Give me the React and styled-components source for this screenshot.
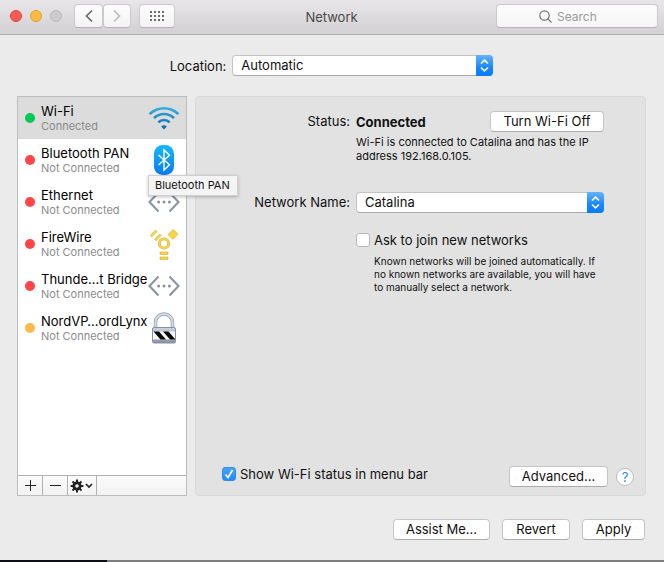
import React from "react";
import styled, { createGlobalStyle } from "styled-components";

const GlobalStyle = createGlobalStyle`
  *, *::before, *::after { box-sizing: border-box; }
  body {
    margin: 0;
    background: #ebebeb;
    color: #111;
    font: 13px/16px Inter, "Liberation Sans", sans-serif;
  }
  button, input, select { font: inherit; color: inherit; margin: 0; }
`;

const Window = styled.div`
  min-height: 100vh;
  display: flex;
  flex-direction: column;
`;

const TitleBar = styled.header`
  display: grid;
  grid-template-columns: 1fr auto 1fr;
  align-items: center;
  height: 35px;
  padding: 0 6px 2px 10px;
  background: linear-gradient(#e8e6e8, #d2d0d2);
  border-bottom: 1px solid #b1afb1;
`;

const Title = styled.h1`
  margin: 0 5px 0 0;
  padding-top: 2px;
  font-size: 13px;
  font-weight: 400;
  color: #484848;
`;

const TitleControls = styled.div`
  display: flex;
  align-items: center;
`;

const Lights = styled.div`
  display: flex;
  gap: 8px;
  margin-right: 12px;
`;

const Light = styled.button`
  width: 12px;
  height: 12px;
  padding: 0;
  border-radius: 50%;
  border: 1px solid ${(p) => p.$edge};
  background: ${(p) => p.$fill};
`;

const ToolButton = styled.button`
  display: grid;
  place-items: center;
  width: ${(p) => p.$width}px;
  height: 24px;
  padding: 0;
  color: ${(p) => (p.$dim ? "#bdbdbd" : "#6b6b6b")};
  background: linear-gradient(#fdfdfd, #f3f3f3);
  border: 1px solid #cbc9cb;
  border-bottom-color: #b4b2b4;
  border-radius: 4px;
`;

const NavButtons = styled.div`
  display: flex;
  margin-right: 8px;
`;

const SearchBox = styled.label`
  justify-self: end;
  display: flex;
  align-items: center;
  gap: 5px;
  width: 100%;
  max-width: 162px;
  height: 24px;
  padding-left: 42px;
  color: #757575;
  background: linear-gradient(#fdfdfd, #f5f5f5);
  border: 1px solid #cbc9cb;
  border-bottom-color: #b4b2b4;
  border-radius: 4px;
`;

const SearchInput = styled.input`
  flex: 1;
  min-width: 0;
  padding: 2px 0 0;
  border: 0;
  outline: 0;
  background: none;
  font-size: 12px;
  &::placeholder { color: #9a9a9a; opacity: 1; }
`;

const LocationRow = styled.div`
  display: flex;
  justify-content: center;
  align-items: center;
  gap: 6px;
  padding: 20px 1px 20px 0;
`;

const SelectBox = styled.div`
  position: relative;
  width: ${(p) => p.$width}px;
`;

const Select = styled.select`
  display: block;
  appearance: none;
  width: 100%;
  height: 21px;
  padding: 0 24px 1px 8px;
  background: #fff;
  border: 1px solid #c4c4c4;
  border-bottom-color: #a9a9a9;
  border-radius: 4px;
`;

const SelectCap = styled.span`
  position: absolute;
  inset: 0 0 0 auto;
  width: 17px;
  display: grid;
  place-items: center;
  pointer-events: none;
  border-radius: 0 4px 4px 0;
  background: linear-gradient(#68b3f8, #1a86fb 60%, #067cff);
`;

const Columns = styled.main`
  flex: 1;
  display: flex;
  gap: 8px;
  padding: 0 18px 0 17px;
`;

const Sidebar = styled.nav`
  width: 170px;
  flex: none;
  display: flex;
  flex-direction: column;
  background: #fff;
  border: 1px solid #bdbdbd;
`;

const ServiceList = styled.ul`
  flex: 1;
  margin: 0;
  padding: 0;
  list-style: none;
`;

const ServiceItem = styled.li`
  position: relative;
`;

const Service = styled.button`
  display: flex;
  align-items: center;
  width: 100%;
  height: 42px;
  padding: 0 6px 0 7px;
  border: 0;
  text-align: left;
  background: ${(p) => (p.$selected ? "#dcdcdc" : "#fff")};
`;

const Dot = styled.span`
  flex: none;
  width: 10px;
  height: 10px;
  margin-right: 6px;
  border-radius: 50%;
  background: ${(p) => p.$color};
`;

const ServiceText = styled.span`
  flex: 1;
  min-width: 0;
  padding-top: 1px;
  white-space: nowrap;
`;

const ServiceName = styled.span`
  display: block;
  line-height: 15px;
  color: #000;
`;

const ServiceState = styled.span`
  display: block;
  font-size: 11px;
  line-height: 14px;
  color: #8b8b8b;
`;

const Tooltip = styled.span`
  position: absolute;
  left: 130px;
  top: 36px;
  z-index: 1;
  padding: 1px 7px 2px 6px;
  font-size: 11px;
  white-space: nowrap;
  background: #f4f4f4;
  border: 1px solid #cfcfcf;
  box-shadow: 0 1px 3px rgba(0, 0, 0, 0.25);
`;

const SidebarTools = styled.div`
  display: flex;
  height: 20px;
  border-top: 1px solid #b2b2b2;
  background: linear-gradient(#fbfbfb, #f2f2f2);
`;

const SidebarTool = styled.button`
  display: grid;
  place-items: center;
  width: ${(p) => (p.$wide ? 29 : 25)}px;
  padding: 0;
  color: #222;
  background: none;
  border: 0;
  border-right: 1px solid #b2b2b2;
`;

const Panel = styled.section`
  flex: 1;
  display: flex;
  flex-direction: column;
  justify-content: space-between;
  padding: 14px 11px 8px 0;
  background: #e2e2e2;
  border: 1px solid #d8d8d8;
  border-radius: 4px;
`;

const Form = styled.div`
  display: grid;
  grid-template-columns: 154px 248px;
  column-gap: 6px;
`;

const FieldLabel = styled.label`
  text-align: right;
  line-height: 21px;
`;

const StatusLine = styled.div`
  display: flex;
  justify-content: space-between;
  align-items: center;
`;

const Note = styled.p`
  grid-column: 2;
  margin: 3px 0 29px;
  font-size: 11px;
  line-height: 14px;
`;

const SmallNote = styled.p`
  margin: 7px 0 0 18px;
  font-size: 10px;
  line-height: 13px;
`;

const AskBlock = styled.div`
  grid-column: 2;
  margin-top: 19px;
`;

const CheckLabel = styled.label`
  display: flex;
  align-items: center;
  gap: 4px;
`;

const CheckBox = styled.span`
  display: grid;
  width: 14px;
  height: 14px;
  > * { grid-area: 1 / 1; }
  > svg { pointer-events: none; visibility: hidden; }
  > input:checked + svg { visibility: visible; }
`;

const CheckInput = styled.input`
  appearance: none;
  width: 14px;
  height: 14px;
  background: #fff;
  border: 1px solid #b9b9b9;
  border-radius: 3px;
  &:checked {
    border-color: #2a8ff2;
    background: linear-gradient(#48a3f8, #238cf6);
  }
`;

const PanelFooter = styled.div`
  display: flex;
  align-items: center;
  padding-left: 26px;
  ${CheckLabel} { flex: 1; padding-bottom: 5px; }
`;

const PushButton = styled.button`
  width: ${(p) => p.$width}px;
  height: 21px;
  padding: 0 0 1px;
  white-space: nowrap;
  background: #fff;
  border: 1px solid #c6c6c6;
  border-bottom-color: #ababab;
  border-radius: 4px;
`;

const HelpButton = styled.button`
  width: 18px;
  height: 18px;
  margin-left: 8px;
  padding: 0;
  color: #1b87f5;
  background: #fff;
  border: 1px solid #bcbcbc;
  border-radius: 50%;
  line-height: 16px;
`;

const Actions = styled.footer`
  display: flex;
  justify-content: flex-end;
  gap: 12px;
  padding: 23px 19px 20px;
`;

const WindowEdge = styled.div`
  height: 2px;
  background: linear-gradient(to right, #0c0e14 107px, #7d7d7d 107px);
`;

const Stroke = ({ w, h, d, width = 1, children }) => (
  <svg width={w} height={h} viewBox={`0 0 ${w} ${h}`} fill="none" stroke="currentColor" strokeWidth={width} aria-hidden="true">
    <path d={d} />
    {children}
  </svg>
);

const GridIcon = () => (
  <svg width="14" height="10" viewBox="0 0 14 10" fill="#6b6b6b" aria-hidden="true">
    {[0, 4, 8].map((y) => [0, 4, 8, 12].map((x) => <rect key={`${x}-${y}`} x={x} y={y} width="2" height="2" />))}
  </svg>
);

const WifiIcon = () => (
  <svg width="32" height="32" viewBox="0 0 32 32" fill="none" aria-hidden="true">
    <defs>
      <linearGradient id="wifi" gradientUnits="userSpaceOnUse" x1="0" y1="5" x2="0" y2="27">
        <stop stopColor="#35aee0" />
        <stop offset="1" stopColor="#0669b2" />
      </linearGradient>
    </defs>
    <g stroke="url(#wifi)" strokeWidth="2.6">
      <path d="M1.6 12.2a20.3 20.3 0 0 1 28.8 0" />
      <path d="M6 16.2a14.1 14.1 0 0 1 20 0" />
      <path d="M10.3 20.3a8.1 8.1 0 0 1 11.4 0" />
    </g>
    <path d="M13.2 24.5q2.8-2.4 5.6 0L16 27.6z" fill="url(#wifi)" />
  </svg>
);

const BluetoothIcon = () => (
  <svg width="32" height="32" viewBox="0 0 32 32" fill="none" aria-hidden="true">
    <defs>
      <linearGradient id="bt" x1="0" y1="0" x2="0" y2="1">
        <stop stopColor="#16b9fb" />
        <stop offset="1" stopColor="#087af0" />
      </linearGradient>
    </defs>
    <rect x="6" y="1" width="20" height="30" rx="8.5" fill="url(#bt)" />
    <path d="M10.5 11l11 9.7-5.5 5.3V6l5.5 5.3-11 9.7" stroke="#fff" strokeWidth="1.4" />
  </svg>
);

const EthernetIcon = () => (
  <svg width="32" height="32" viewBox="0 0 32 32" fill="none" aria-hidden="true">
    <path d="M10.5 6.5L1.5 16l9 9.5M21.5 6.5l9 9.5-9 9.5" stroke="#8e97a5" strokeWidth="2.2" />
    <g fill="#8994a4">
      <circle cx="10.6" cy="16" r="1.5" />
      <circle cx="16" cy="16" r="1.5" />
      <circle cx="21.4" cy="16" r="1.5" />
    </g>
  </svg>
);

const FireWireIcon = () => (
  <svg width="32" height="32" viewBox="0 0 32 32" aria-hidden="true">
    <circle cx="16" cy="15.5" r="4.7" fill="none" stroke="#d4aa2b" strokeWidth="2.8" />
    <circle cx="16" cy="15.5" r="4.7" fill="none" stroke="#f7d64d" strokeWidth="1.8" />
    <g fill="#f7d548" stroke="#d4aa2b" strokeWidth="0.6">
      <path d="M20 6.5L25.3 1.4l4.7 4.9-5.1 5.1z" />
      <path d="M2.3 7.2l5.3-5.2 1.5 1.6-5.3 5.2zM6.4 11.2l5.3-5.2 1.5 1.6-5.3 5.2z" />
      <path d="M12 24h8v2.5h-8zM12 29h8v2.5h-8z" />
    </g>
  </svg>
);

const LockIcon = () => (
  <svg width="32" height="32" viewBox="0 0 32 32" aria-hidden="true">
    <defs>
      <linearGradient id="lock" x1="0" y1="0" x2="0" y2="1">
        <stop stopColor="#cdd5de" />
        <stop offset="1" stopColor="#8793a5" />
      </linearGradient>
    </defs>
    <path d="M7.5 16V10.5a8.5 8.5 0 0 1 17 0V16" fill="none" stroke="#8f9bad" strokeWidth="3.5" />
    <path d="M7.5 16V10.5a8.5 8.5 0 0 1 17 0V16" fill="none" stroke="#d6dce4" strokeWidth="2" />
    <rect x="4.5" y="15.5" width="23" height="15.5" rx="1.5" fill="url(#lock)" stroke="#8491a3" />
    <path d="M5 19.5h22v8H5z" fill="#f6f6f6" />
    <path d="M5.5 19.5h5.5l7 8h-5.5zM15 19.5h5.5l6.5 7.5v.5h-5z" fill="#080808" />
  </svg>
);

const GearIcon = () => (
  <svg width="24" height="14" viewBox="0 0 24 14" fill="none" stroke="currentColor" aria-hidden="true">
    <circle cx="7" cy="7" r="3.2" strokeWidth="2.8" />
    <path d="M7 .6v3M7 10.4v3M.6 7h3M10.4 7h3M2.5 2.5l2 2M9.5 9.5l2 2M2.5 11.5l2-2M9.5 4.5l2-2" strokeWidth="2" />
    <path d="M16 5l3 3 3-3" strokeWidth="1.6" />
  </svg>
);

const services = [
  { name: "Wi-Fi", state: "Connected", color: "#00ca56", icon: WifiIcon, selected: true },
  { name: "Bluetooth PAN", state: "Not Connected", color: "#ff4548", icon: BluetoothIcon, tip: "Bluetooth PAN" },
  { name: "Ethernet", state: "Not Connected", color: "#ff4548", icon: EthernetIcon },
  { name: "FireWire", state: "Not Connected", color: "#ff4548", icon: FireWireIcon },
  { name: "Thunde…t Bridge", state: "Not Connected", color: "#ff4548", icon: EthernetIcon },
  { name: "NordVP…ordLynx", state: "Not Connected", color: "#ffb849", icon: LockIcon },
];

const Popup = ({ id, width, value }) => (
  <SelectBox $width={width}>
    <Select id={id} defaultValue={value}>
      <option>{value}</option>
    </Select>
    <SelectCap>
      <svg width="9" height="13" viewBox="0 0 9 13" fill="none" stroke="#fff" strokeWidth="1.6" aria-hidden="true">
        <path d="M1 4.5L4.5 1.2 8 4.5M1 8.5l3.5 3.3L8 8.5" />
      </svg>
    </SelectCap>
  </SelectBox>
);

const Check = ({ checked, children }) => (
  <CheckLabel>
    <CheckBox>
      <CheckInput type="checkbox" defaultChecked={checked} />
      <svg width="14" height="14" viewBox="0 0 14 14" fill="none" stroke="#fff" strokeWidth="1.7" aria-hidden="true">
        <path d="M3.5 7.5l2.5 3L10.5 3" />
      </svg>
    </CheckBox>
    {children}
  </CheckLabel>
);

export default function App() {
  return (
    <>
      <GlobalStyle />
      <Window>
        <TitleBar>
          <TitleControls>
            <Lights>
              <Light aria-label="Close" $fill="#fc5b57" $edge="#e2443f" />
              <Light aria-label="Minimize" $fill="#fdbb41" $edge="#df9f34" />
              <Light aria-label="Zoom" $fill="#cdcbcd" $edge="#b9b7b9" />
            </Lights>
            <NavButtons>
              <ToolButton $width={29} aria-label="Back">
                <Stroke w={8} h={14} width={1.7} d="M7 1.5L1.5 7 7 12.5" />
              </ToolButton>
              <ToolButton $width={28} $dim aria-label="Forward">
                <Stroke w={8} h={14} width={1.7} d="M1 1.5L6.5 7 1 12.5" />
              </ToolButton>
            </NavButtons>
            <ToolButton $width={36} aria-label="Show All">
              <GridIcon />
            </ToolButton>
          </TitleControls>
          <Title>Network</Title>
          <SearchBox>
            <Stroke w={13} h={13} width={1.2} d="M8.7 8.7l3.8 3.8">
              <circle cx="5.5" cy="5.5" r="4.7" />
            </Stroke>
            <SearchInput type="text" placeholder="Search" aria-label="Search" />
          </SearchBox>
        </TitleBar>

        <LocationRow>
          <label htmlFor="location">Location:</label>
          <Popup id="location" width={261} value="Automatic" />
        </LocationRow>

        <Columns>
          <Sidebar aria-label="Services">
            <ServiceList>
              {services.map(({ name, state, color, icon: Icon, selected, tip }) => (
                <ServiceItem key={name}>
                  <Service $selected={selected}>
                    <Dot $color={color} />
                    <ServiceText>
                      <ServiceName>{name}</ServiceName>
                      <ServiceState>{state}</ServiceState>
                    </ServiceText>
                    <Icon />
                  </Service>
                  {tip && <Tooltip role="tooltip">{tip}</Tooltip>}
                </ServiceItem>
              ))}
            </ServiceList>
            <SidebarTools>
              <SidebarTool aria-label="Add service"><Stroke w={11} h={11} d="M0 5.5h11M5.5 0v11" /></SidebarTool>
              <SidebarTool aria-label="Remove service"><Stroke w={11} h={11} d="M0 5.5h11" /></SidebarTool>
              <SidebarTool $wide aria-label="Service options"><GearIcon /></SidebarTool>
            </SidebarTools>
          </Sidebar>

          <Panel>
            <Form>
              <FieldLabel as="span">Status:</FieldLabel>
              <StatusLine>
                <strong>Connected</strong>
                <PushButton $width={114}>Turn Wi-Fi Off</PushButton>
              </StatusLine>
              <Note>Wi-Fi is connected to Catalina and has the IP address 192.168.0.105.</Note>
              <FieldLabel htmlFor="network">Network Name:</FieldLabel>
              <Popup id="network" width={248} value="Catalina" />
              <AskBlock>
                <Check>Ask to join new networks</Check>
                <SmallNote>
                  Known networks will be joined automatically. If no known networks are available, you will have to
                  manually select a network.
                </SmallNote>
              </AskBlock>
            </Form>
            <PanelFooter>
              <Check checked>Show Wi-Fi status in menu bar</Check>
              <PushButton $width={99}>Advanced...</PushButton>
              <HelpButton aria-label="Help">?</HelpButton>
            </PanelFooter>
          </Panel>
        </Columns>

        <Actions>
          <PushButton $width={97}>Assist Me...</PushButton>
          <PushButton $width={68}>Revert</PushButton>
          <PushButton $width={63}>Apply</PushButton>
        </Actions>
        <WindowEdge />
      </Window>
    </>
  );
}
